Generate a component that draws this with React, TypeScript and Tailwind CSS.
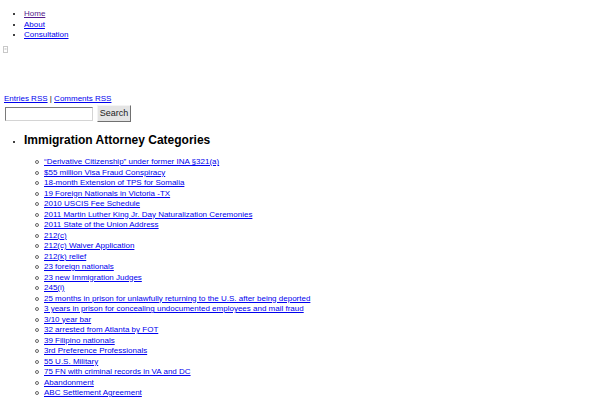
const navLinks = ["Home", "About", "Consultation"]

const categories = [
  "\u201cDerivative Citizenship\u201d under former INA \u00a7321(a)",
  "$55 million Visa Fraud Conspiracy",
  "18-month Extension of TPS for Somalia",
  "19 Foreign Nationals in Victoria -TX",
  "2010 USCIS Fee Schedule",
  "2011 Martin Luther King Jr. Day Naturalization Ceremonies",
  "2011 State of the Union Address",
  "212(c)",
  "212(c) Waiver Application",
  "212(k) relief",
  "23 foreign nationals",
  "23 new Immigration Judges",
  "245(i)",
  "25 months in prison for unlawfully returning to the U.S. after being deported",
  "3 years in prison for concealing undocumented employees and mail fraud",
  "3/10 year bar",
  "32 arrested from Atlanta by FOT",
  "39 Filipino nationals",
  "3rd Preference Professionals",
  "55 U.S. Military",
  "75 FN with criminal records in VA and DC",
  "Abandonment",
  "ABC Settlement Agreement",
]

export default function App() {
  return (
    <div className="bg-white text-black text-[8px] leading-[10.5px] font-['Liberation_Sans',Arial,sans-serif] h-[400px] overflow-hidden">
      <ul className="list-disc pl-[24px] pt-[9px]">
        {navLinks.map((l, i) => (
          <li key={l}>
            <a href="#" className={"underline " + (i === 0 ? "text-[#551a8b]" : "text-[#0000ee]")}>
              {l}
            </a>
          </li>
        ))}
      </ul>

      <div className="mt-[5px] ml-[3px] h-[47px]">
        <svg width="5" height="7" viewBox="0 0 5 7">
          <rect x="0.5" y="0.5" width="4" height="6" fill="none" stroke="#c8c8c8" />
          <rect x="1.5" y="2" width="2" height="2" fill="#dcdcdc" />
        </svg>
      </div>

      <p className="pl-[4px] mt-[1px]">
        <a href="#" className="underline text-[#0000ee]">Entries RSS</a>
        {" | "}
        <a href="#" className="underline text-[#0000ee]">Comments RSS</a>
      </p>

      <form className="flex items-center mt-[1px]" onSubmit={(e) => e.preventDefault()}>
        <input
          type="text"
          className="ml-[5px] w-[88px] h-[14px] border border-t-[#7a7a7a] border-l-[#7a7a7a] border-b-[#d4d4d4] border-r-[#d4d4d4] bg-white outline-none"
        />
        <button
          type="submit"
          className="ml-[4px] h-[17px] w-[34px] text-[9px] leading-[15px] bg-[#e4e4e4] border border-[#f4f4f4] border-b-[#707070] border-r-[#707070] text-[#222]"
        >
          Search
        </button>
      </form>

      <ul className="list-disc pl-[24px] mt-[11px]">
        <li>
          <h2 className="text-[12px] leading-[14px] font-bold">Immigration Attorney Categories</h2>
          <ul className="pl-[35px] -ml-[24px] mt-[10px]">
            {categories.map((c) => (
              <li key={c} className="flex items-center gap-[5px]">
                <span className="w-[4px] h-[4px] rounded-full border border-[#666] shrink-0" />
                <a href="#" className="underline text-[#0000ee]">{c}</a>
              </li>
            ))}
          </ul>
        </li>
      </ul>
    </div>
  )
}
